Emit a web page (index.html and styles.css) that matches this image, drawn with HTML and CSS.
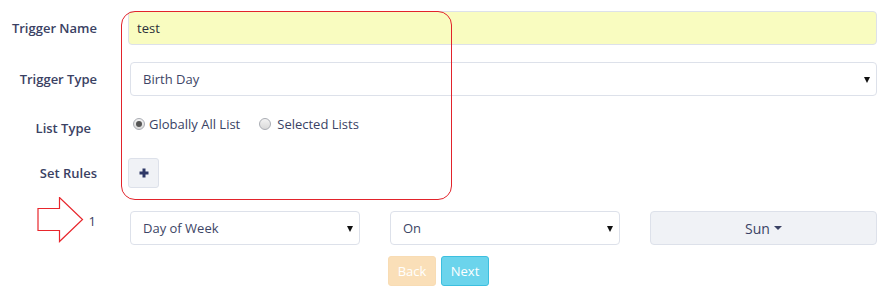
FILE: index.html
```html
<!DOCTYPE html>
<html>
<head>
<meta charset="utf-8">
<link rel="stylesheet" href="styles.css">
</head>
<body>
<div class="form">
  <div class="row row-name">
    <div class="label">Trigger Name</div>
    <div class="input input-yellow">test</div>
  </div>
  <div class="row row-type">
    <div class="label">Trigger Type</div>
    <div class="input select shift">Birth Day<span class="tri"></span></div>
  </div>
  <div class="row row-list">
    <div class="label label-list">List Type</div>
    <div class="radios">
      <span class="radio checked"></span><span class="rtext first">Globally All List</span>
      <span class="radio"></span><span class="rtext second">Selected Lists</span>
    </div>
  </div>
  <div class="row row-rules">
    <div class="label">Set Rules</div>
    <div class="plus-btn">
      <svg width="10" height="10" viewBox="0 0 10 10"><rect x="3.5" y="0.5" width="3" height="9" fill="#2e3866"/><rect x="0.5" y="3.5" width="9" height="3" fill="#2e3866"/></svg>
    </div>
  </div>
  <div class="row row-rule1">
    <div class="label label-num">1</div>
    <div class="rule-grid">
      <div class="input select">Day of Week<span class="tri"></span></div>
      <div class="input select">On<span class="tri"></span></div>
      <div class="day-btn">Sun<span class="caret"></span></div>
    </div>
  </div>
  <div class="actions">
    <button class="btn btn-back">Back</button>
    <button class="btn btn-next">Next</button>
  </div>

  <div class="highlight"></div>
  <svg class="arrow" width="48" height="47" viewBox="0 0 48 47">
    <polygon points="1,11.5 22.5,11.5 22.5,0.5 45.5,22.5 22.5,44.5 22.5,33.5 1,33.5" fill="none" stroke="#e8262c" stroke-width="1.2"/>
  </svg>
</div>
</body>
</html>
```

FILE: styles.css
```css
html, body {
  margin: 0;
  padding: 0;
  background: #ffffff;
}
body {
  font-family: "Open Sans", "Noto Sans", sans-serif;
  font-size: 13px;
  color: #3a4264;
}
.form {
  position: relative;
  width: 877px;
  padding-top: 11px;
}
.row {
  display: flex;
  align-items: center;
}
.label {
  width: 97px;
  flex: none;
  margin-right: 31px;
  text-align: right;
  font-weight: 600;
  color: #3a4163;
}
.label-list {
  width: 91px;
  margin-right: 37px;
  position: relative;
  top: 4px;
}
.label-num {
  width: 96px;
  margin-right: 34px;
  font-weight: 400;
  position: relative;
  top: -7px;
}
.input {
  flex: 1;
  height: 34px;
  box-sizing: border-box;
  border: 1px solid #dde1ea;
  border-radius: 4px;
  display: flex;
  align-items: center;
  padding-left: 12px;
  background: #fff;
  color: #3d4566;
}
.input-yellow {
  background: #f9fcc0;
  color: #2b2f3a;
  padding-left: 8px;
}
.shift {
  margin-left: 2px;
}
.select {
  position: relative;
}
.tri {
  position: absolute;
  right: 6px;
  top: 14px;
  width: 0;
  height: 0;
  border-left: 3.5px solid transparent;
  border-right: 3.5px solid transparent;
  border-top: 6px solid #111;
}
.row-type {
  margin-top: 17px;
}
.row-list {
  margin-top: 16px;
  height: 24px;
}
.radios {
  display: flex;
  align-items: center;
  margin-left: 5px;
}
.radio {
  width: 12px;
  height: 12px;
  box-sizing: border-box;
  border-radius: 50%;
  border: 1px solid #a9acb3;
  background: linear-gradient(#f3f3f3, #d9d9d9);
  position: relative;
}
.radio.checked::after {
  content: "";
  position: absolute;
  left: 2px;
  top: 2px;
  width: 6px;
  height: 6px;
  border-radius: 50%;
  background: #555;
}
.rtext.first {
  margin-left: 4px;
  margin-right: 19px;
}
.rtext.second {
  margin-left: 6px;
}
.row-rules {
  margin-top: 22px;
}
.plus-btn {
  width: 31px;
  height: 30px;
  box-sizing: border-box;
  border: 1px solid #dde1ea;
  border-radius: 3px;
  background: #f0f2f6;
  display: flex;
  align-items: center;
  justify-content: center;
}
.row-rule1 {
  margin-top: 23px;
}
.rule-grid {
  flex: 1;
  display: grid;
  grid-template-columns: 230px 230px 227px;
  column-gap: 30px;
}
.day-btn {
  height: 34px;
  box-sizing: border-box;
  border: 1px solid #dde1ea;
  border-radius: 4px;
  background: #f0f2f6;
  display: flex;
  align-items: center;
  justify-content: center;
  font-size: 14px;
  color: #3a4264;
}
.caret {
  display: inline-block;
  margin-left: 4px;
  width: 0;
  height: 0;
  border-left: 4px solid transparent;
  border-right: 4px solid transparent;
  border-top: 4px solid #3a4264;
}
.actions {
  display: flex;
  justify-content: center;
  gap: 5px;
  margin-top: 11px;
}
.btn {
  font-family: "Open Sans", "Noto Sans", sans-serif;
  font-size: 13px;
  color: #fff;
  width: 48px;
  height: 30px;
  border-radius: 3px;
  padding: 0;
  box-sizing: border-box;
}
.btn-back {
  background: #fadfb8;
  border: 1px solid #f8dcb4;
}
.btn-next {
  background: #6bd4ec;
  border: 1px solid #3cbfdf;
}
.highlight {
  position: absolute;
  left: 121px;
  top: 11px;
  width: 331px;
  height: 189px;
  box-sizing: border-box;
  border: 1px solid #e2232b;
  border-radius: 14px;
  pointer-events: none;
}
.arrow {
  position: absolute;
  left: 37px;
  top: 197px;
}
```
